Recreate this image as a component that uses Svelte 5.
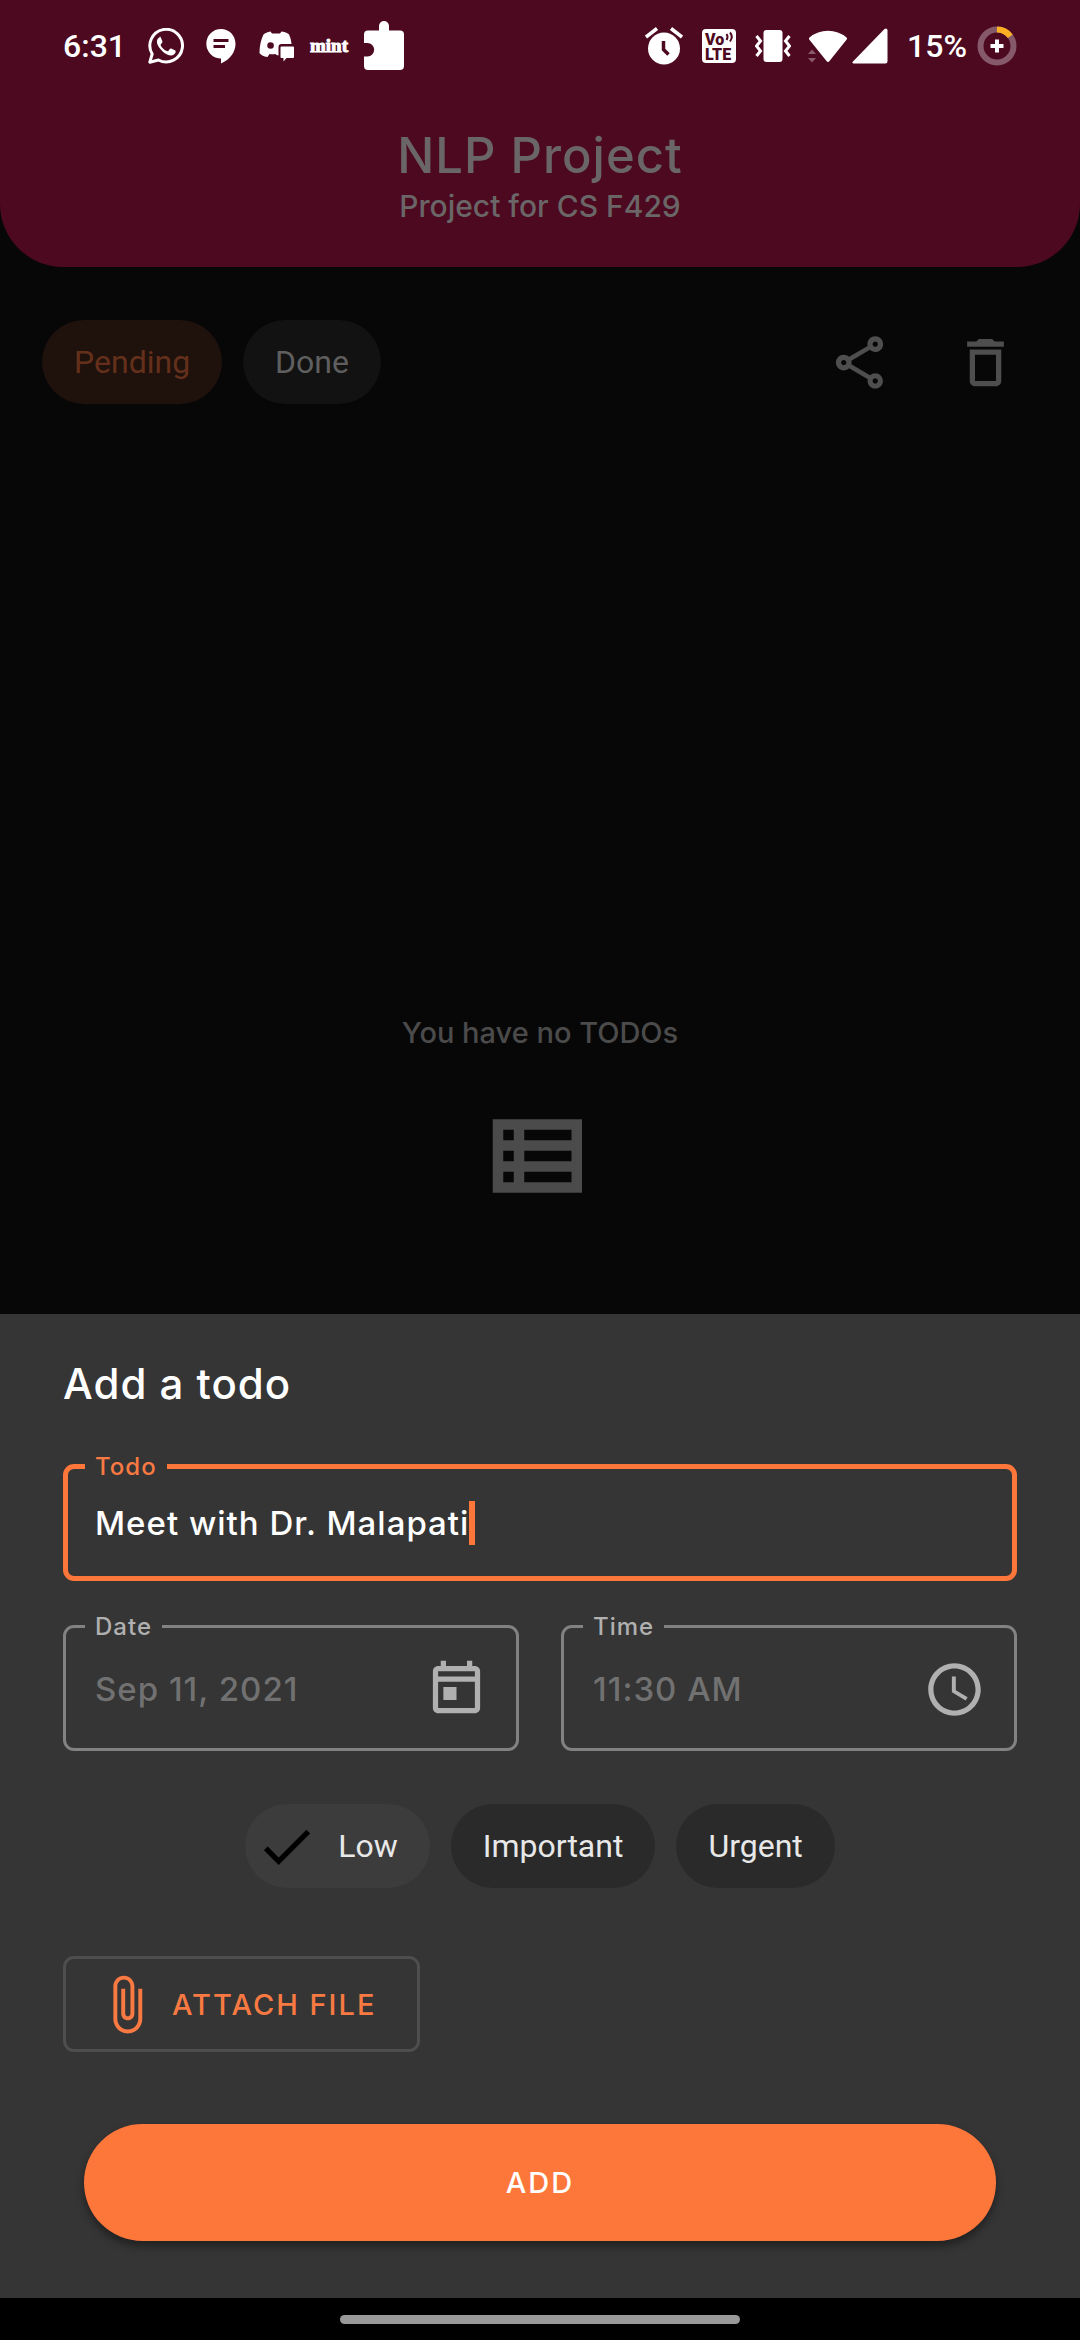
<script>
  let todo = $state('Meet with Dr. Malapati');
  let date = $state('Sep 11, 2021');
  let time = $state('11:30 AM');
  let priority = $state('Low');
  const priorities = ['Low', 'Important', 'Urgent'];
</script>

<div class="app">
  <div class="screen">
    <header class="header">
      <div class="status">
        <div class="status-left">
          <span class="clock">6:31</span>
          <svg width="36" height="36" viewBox="0 0 36 36" aria-label="WhatsApp">
            <path fill="none" stroke="#fff" stroke-width="3" stroke-linejoin="round" d="M1.8 34.2 4.2 26A16.3 16.3 0 1 1 10.500 32Z" />
            <path fill="#fff" d="M11.600 9.500c-.8 0-2.600 1.400-2.700 3.900-.1 2.500 1.500 5 3.500 7.500 2.400 2.900 6 6 10.300 6.500 2.300.2 4.400-1.500 4.800-3 .2-.9.200-1.600-.2-1.900l-4.100-2c-.6-.2-1 0-1.400.5l-1.500 1.900c-.4.4-.8.400-1.300.2-2.800-1.200-5-3.300-6.300-5.700-.2-.5-.1-.9.200-1.200l1.400-1.800c.3-.4.200-.9 0-1.300l-1.500-3.600c-.300-.8-.700-1-1.200-1z" />
          </svg>
          <svg class="chat" width="30" height="35" viewBox="0 0 30 35" aria-label="Chat">
            <path fill="#fff" d="M15 0C23.300 0 29.500 6.500 29.500 15c0 8-5.500 15.500-14.500 19.500V29.500A14.600 14.700 0 0 1 15 0z" />
            <path stroke="#4d0920" stroke-width="3" d="M7.500 11.500h15M7.500 17.500h11.500" />
          </svg>
          <svg class="discord" width="36" height="31" viewBox="0 0 36 31" aria-label="Discord">
            <path fill="#fff" fill-rule="evenodd" d="M11.500.500 13 2.500h8L22.500.500C27 1.200 29.500 2.500 30 3.500c1.500 3 2.200 6 2.500 9.500H22.500a3 3 0 0 0-3 3V24.500c-1.500 0-2.500-.8-3-1.500-2 .3-4 .3-6 0L8.500 26C4.500 25.500 1.500 23.500.500 22 .500 15 2 8.500 4.500 3.500 6 2 8.500 1 11.500.500zM11.500 11.200a3.300 3.300 0 1 0 .1 6.600 3.300 3.300 0 0 0-.1-6.600z" />
            <path fill="#fff" d="M22.500 15.500h11.500a1 1 0 0 1 1 1V26a1 1 0 0 1-1 1h-6.500L24.500 30.500V27h-2a1 1 0 0 1-1-1V16.500a1 1 0 0 1 1-1z" />
          </svg>
          <span class="mint">mint</span>
          <svg class="puzzle" width="40" height="50" viewBox="0 0 40 50" aria-label="Extension">
            <path fill="#fff" d="M4 9.500h11V5a5 5 0 0 1 10 0v4.500h11a4 4 0 0 1 4 4V45a4 4 0 0 1-4 4H4a4 4 0 0 1-4-4V35.500h3.500a6.700 6.700 0 0 0 0-13.400H0V13.500a4 4 0 0 1 4-4z" />
          </svg>
        </div>
        <div class="status-right">
          <svg width="38" height="38" viewBox="0 0 38 38" aria-label="Alarm">
            <circle cx="19" cy="21.500" r="16" fill="#fff" />
            <path stroke="#fff" stroke-width="3.500" d="M1 10 12 1.500M37 10 26 1.500" />
            <path fill="none" stroke="#4d0920" stroke-width="3.500" d="M18.500 14v8.500l5 5" />
          </svg>
          <svg class="volte" width="34" height="34" viewBox="0 0 34 34" aria-label="VoLTE">
            <rect width="34" height="34" rx="4" fill="#fff" />
            <text x="3" y="16" class="vo">Vo</text>
            <text x="3" y="31" class="vo">LTE</text>
            <path fill="none" stroke="#4d0920" stroke-width="2" d="M24.500 5q2 2.500 0 6M28 3.500q3.500 4 0 9" />
          </svg>
          <svg class="vibrate" width="36" height="34" viewBox="0 0 36 34" aria-label="Vibrate">
            <rect x="8.500" y="1" width="19" height="32" rx="3" fill="#fff" />
            <path fill="none" stroke="#fff" stroke-width="3" d="m1.500 7 4 5-4 5 4 5-4 5M34.500 7l-4 5 4 5-4 5 4 5" />
          </svg>
          <svg class="wifi" width="40" height="34" viewBox="0 0 40 34" aria-label="Wi-Fi">
            <path fill="#fff" d="M1.500 8.500a29 29 0 0 1 37 0q1 1 .2 2L21.500 32q-1.500 1.800-3 0L1.200 10.500q-.6-1 .3-2z" />
            <path fill="#8a5a69" d="m0 25 4-4.500 4 4.500zM0 29h8l-4 4.500z" />
          </svg>
          <svg width="36" height="36" viewBox="0 0 36 36" aria-label="Signal">
            <path fill="#fff" d="M35.500 2v31.500a2 2 0 0 1-2 2H1.500Q-.5 35 1 33.500L32.500 1q2.500-1.500 3 1z" />
          </svg>
          <span class="percent">15%</span>
          <svg width="40" height="40" viewBox="0 0 40 40" aria-label="Battery charging">
            <circle cx="20" cy="20" r="16.500" fill="none" stroke="#85596a" stroke-width="6" />
            <path fill="none" stroke="#fdb022" stroke-width="6" d="M20 3.500A16.500 16.500 0 0 1 33.300 10.300" />
            <path stroke="#fff" stroke-width="4" d="M13.500 20h13M20 13.500v13" />
          </svg>
        </div>
      </div>
      <h1>NLP Project</h1>
      <p>Project for CS F429</p>
    </header>

    <div class="toolbar">
      <button class="chip filter active">Pending</button>
      <button class="chip filter">Done</button>
      <div class="actions">
        <button aria-label="Share">
          <svg width="63" height="63" viewBox="0 0 24 24" fill="#4e4e4e"><path d="M18 16.080c-.76 0-1.440.3-1.960.77L8.910 12.700c.05-.23.09-.46.09-.7s-.04-.47-.09-.7l7.050-4.110c.54.5 1.250.81 2.040.81 1.660 0 3-1.340 3-3s-1.340-3-3-3-3 1.340-3 3c0 .24.04.47.09.7L8.040 9.810C7.500 9.310 6.790 9 6 9c-1.660 0-3 1.340-3 3s1.340 3 3 3c.79 0 1.500-.31 2.040-.81l7.120 4.160c-.05.21-.08.43-.08.65 0 1.610 1.310 2.920 2.920 2.920s2.920-1.310 2.920-2.920-1.310-2.920-2.920-2.920zM18 4c.55 0 1 .45 1 1s-.45 1-1 1-1-.45-1-1 .45-1 1-1zM6 13c-.55 0-1-.45-1-1s.45-1 1-1 1 .45 1 1-.45 1-1 1zm12 7.020c-.55 0-1-.45-1-1s.45-1 1-1 1 .45 1 1-.45 1-1 1z" /></svg>
        </button>
        <button aria-label="Delete">
          <svg width="63" height="63" viewBox="0 0 24 24" fill="#4e4e4e"><path d="M6 19c0 1.100.9 2 2 2h8c1.100 0 2-.9 2-2V7H6v12zM8 9h8v10H8V9zm7.500-5l-1-1h-5l-1 1H5v2h14V4z" /></svg>
        </button>
      </div>
    </div>

    <div class="empty">
      <p>You have no TODOs</p>
      <svg width="126" height="126" viewBox="0 0 24 24" fill="#4b4b4b"><path d="M3 5v14h17V5H3zm4 2v2H5V7h2zm-2 6v-2h2v2H5zm0 2h2v2H5v-2zm13 2H9v-2h9v2zm0-4H9v-2h9v2zm0-4H9V7h9v2z" /></svg>
    </div>
  </div>

  <form class="sheet" onsubmit={(e) => e.preventDefault()}>
    <h2>Add a todo</h2>

    <fieldset class="field focused">
      <legend><label for="todo">Todo</label></legend>
      <div class="field-row">
        <input id="todo" class="todo" type="text" bind:value={todo} autocomplete="off" spellcheck="false" />
        <span class="caret"></span>
      </div>
    </fieldset>

    <div class="pair">
      <fieldset class="field">
        <legend><label for="date">Date</label></legend>
        <div class="field-row">
          <input id="date" type="text" bind:value={date} />
          <button type="button" class="icon" aria-label="Pick a date">
            <svg width="63" height="63" viewBox="0 0 24 24" fill="#b0b0b0"><path d="M19 3h-1V1h-2v2H8V1H6v2H5c-1.110 0-1.990.9-1.990 2L3 19c0 1.100.89 2 2 2h14c1.100 0 2-.9 2-2V5c0-1.100-.9-2-2-2zm0 16H5V9h14v10zm0-12H5V5h14v2zM7 11h5v5H7z" /></svg>
          </button>
        </div>
      </fieldset>
      <fieldset class="field">
        <legend><label for="time">Time</label></legend>
        <div class="field-row">
          <input id="time" type="text" bind:value={time} />
          <button type="button" class="icon" aria-label="Pick a time">
            <svg width="63" height="63" viewBox="0 0 24 24" fill="#b0b0b0"><path d="M11.990 2C6.470 2 2 6.480 2 12s4.470 10 9.990 10C17.520 22 22 17.520 22 12S17.520 2 11.990 2zM12 20c-4.420 0-8-3.580-8-8s3.580-8 8-8 8 3.580 8 8-3.580 8-8 8zm.5-13H11v6l5.250 3.150.75-1.230-4.500-2.670z" /></svg>
          </button>
        </div>
      </fieldset>
    </div>

    <div class="priorities" role="radiogroup" aria-label="Priority">
      {#each priorities as p}
        <label class="chip" class:selected={priority === p}>
          <input type="radio" name="priority" value={p} bind:group={priority} />
          {#if priority === p}
            <svg width="63" height="63" viewBox="0 0 24 24"><path d="M9 16.170 4.830 12l-1.420 1.410L9 19 21 7l-1.410-1.410z" /></svg>
          {/if}
          <span>{p}</span>
        </label>
      {/each}
    </div>

    <button type="button" class="attach">
      <svg width="63" height="63" viewBox="0 0 24 24" fill="#f87a42"><path d="M16.500 6v11.500c0 2.210-1.790 4-4 4s-4-1.790-4-4V5c0-1.380 1.120-2.500 2.500-2.500s2.500 1.120 2.500 2.500v10.500c0 .55-.45 1-1 1s-1-.45-1-1V6H10v9.500c0 1.380 1.120 2.500 2.500 2.500s2.500-1.120 2.500-2.500V5c0-2.210-1.790-4-4-4S7 2.790 7 5v12.500c0 3.040 2.460 5.500 5.500 5.500s5.500-2.460 5.500-5.500V6h-1.500z" /></svg>
      <span>ATTACH FILE</span>
    </button>

    <button type="submit" class="add">ADD</button>
  </form>

  <div class="navbar"><span></span></div>
</div>

<style>
  :global(body) {
    margin: 0;
    background: #000;
  }
  .app {
    display: flex;
    flex-direction: column;
    min-height: 100vh;
    font-family: Inter, "Liberation Sans", sans-serif;
    font-weight: 500;
    background: #070707;
  }
  h1,
  h2,
  p {
    margin: 0;
  }
  svg {
    display: block;
    flex: none;
  }
  button {
    font: inherit;
    border: 0;
    padding: 0;
    background: none;
    cursor: pointer;
  }
  .screen {
    flex: 1;
    display: flex;
    flex-direction: column;
  }

  .header {
    background: #4d0920;
    border-radius: 0 0 63px 63px;
    padding-bottom: 41px;
    text-align: center;
    color: #6a6667;
  }
  .status {
    display: flex;
    justify-content: space-between;
    align-items: center;
    height: 92px;
    padding: 0 63px;
    color: #fff;
    font-family: Roboto, sans-serif;
    font-size: 32px;
  }
  .status-left,
  .status-right {
    display: flex;
    align-items: center;
  }
  .clock {
    margin-right: 22px;
  }
  .chat {
    margin-left: 22px;
  }
  .discord {
    margin: 0 15px 0 23px;
  }
  .mint {
    font-family: "Liberation Serif", serif;
    font-weight: 900;
    font-size: 19px;
    -webkit-text-stroke: 1px #fff;
  }
  .puzzle {
    margin-left: 16px;
  }
  .volte {
    margin: 0 19px;
  }
  .vo {
    font-family: Roboto, sans-serif;
    font-weight: 900;
    font-size: 16px;
    fill: #4d0920;
  }
  .wifi {
    margin: 0 4px 0 17px;
  }
  .percent {
    margin: 0 10px 0 19px;
  }
  h1 {
    font-size: 49px;
    line-height: 60px;
    font-weight: 500;
    letter-spacing: 1px;
    padding-top: 34px;
  }
  .header p {
    font-size: 30px;
    line-height: 40px;
  }

  .toolbar {
    display: flex;
    align-items: center;
    gap: 21px;
    padding: 53px 63px 0 42px;
  }
  .chip {
    display: flex;
    align-items: center;
    height: 84px;
    padding: 0 32px;
    border-radius: 42px;
    font-family: Roboto, sans-serif;
    font-weight: 400;
    font-size: 32px;
    background: #2a2a2a;
    color: #e8e8e8;
  }
  .chip.filter {
    background: #121212;
    color: #5f5f5f;
  }
  .chip.active {
    background: #1f110c;
    color: #64301b;
  }
  .actions {
    display: flex;
    gap: 63px;
    margin-left: auto;
  }

  .empty {
    flex: 1;
    display: flex;
    flex-direction: column;
    align-items: center;
    justify-content: flex-end;
    gap: 42px;
    padding-bottom: 95px;
    color: #4b4b4b;
    font-size: 29px;
    line-height: 36px;
  }

  .sheet {
    display: flex;
    flex-direction: column;
    padding: 44px 63px 57px;
    background: #353535;
    color: #fff;
  }
  h2 {
    font-size: 42px;
    line-height: 52px;
    font-weight: 500;
    letter-spacing: 1px;
    margin-bottom: 40px;
  }
  .field {
    box-sizing: border-box;
    min-width: 0;
    margin: 0;
    padding: 0 28px 0 29px;
    border: 3px solid #828282;
    border-radius: 11px;
    color: #b0b0b0;
  }
  legend {
    margin-left: -10px;
    padding: 2px 10px 0;
    font-size: 24px;
    line-height: 30px;
    letter-spacing: 1px;
  }
  .field-row {
    box-sizing: border-box;
    display: flex;
    align-items: center;
    height: 106px;
    padding-bottom: 12px;
  }
  .field input {
    flex: 1;
    min-width: 0;
    padding: 0;
    border: 0;
    outline: 0;
    background: none;
    color: #717171;
    font: inherit;
    font-size: 33px;
    line-height: 44px;
    letter-spacing: 1px;
  }
  .focused {
    border: 5px solid #fd773b;
    padding: 0 27px;
    color: #f87a42;
  }
  .focused .field-row {
    height: 94px;
  }
  .field .todo {
    flex: none;
    field-sizing: content;
    color: #fff;
    caret-color: transparent;
  }
  .caret {
    width: 6px;
    height: 44px;
    background: #fd773b;
  }
  .pair {
    display: grid;
    grid-template-columns: 1fr 1fr;
    gap: 42px;
    margin-top: 29px;
  }

  .priorities {
    display: flex;
    justify-content: center;
    gap: 21px;
    margin-top: 53px;
  }
  .priorities input {
    position: absolute;
    opacity: 0;
  }
  .selected {
    gap: 20px;
    padding-left: 10px;
    background: #3c3c3c;
  }

  .attach {
    box-sizing: border-box;
    align-self: flex-start;
    display: flex;
    align-items: center;
    gap: 14px;
    height: 96px;
    margin-top: 68px;
    padding: 0 41px 0 29px;
    border: 3px solid #4e4e4e;
    border-radius: 11px;
    color: #f87a42;
    font-size: 29px;
    letter-spacing: 2px;
  }
  .add {
    height: 117px;
    margin: 72px 21px 0;
    border-radius: 59px;
    background: #fd773b;
    color: #fff;
    font-size: 29px;
    letter-spacing: 2px;
    box-shadow: 0 5px 8px rgba(0, 0, 0, 0.4);
  }

  .navbar {
    display: flex;
    justify-content: center;
    align-items: center;
    height: 42px;
    background: #000;
  }
  .navbar span {
    width: 37%;
    height: 9px;
    border-radius: 5px;
    background: #999;
  }
</style>
